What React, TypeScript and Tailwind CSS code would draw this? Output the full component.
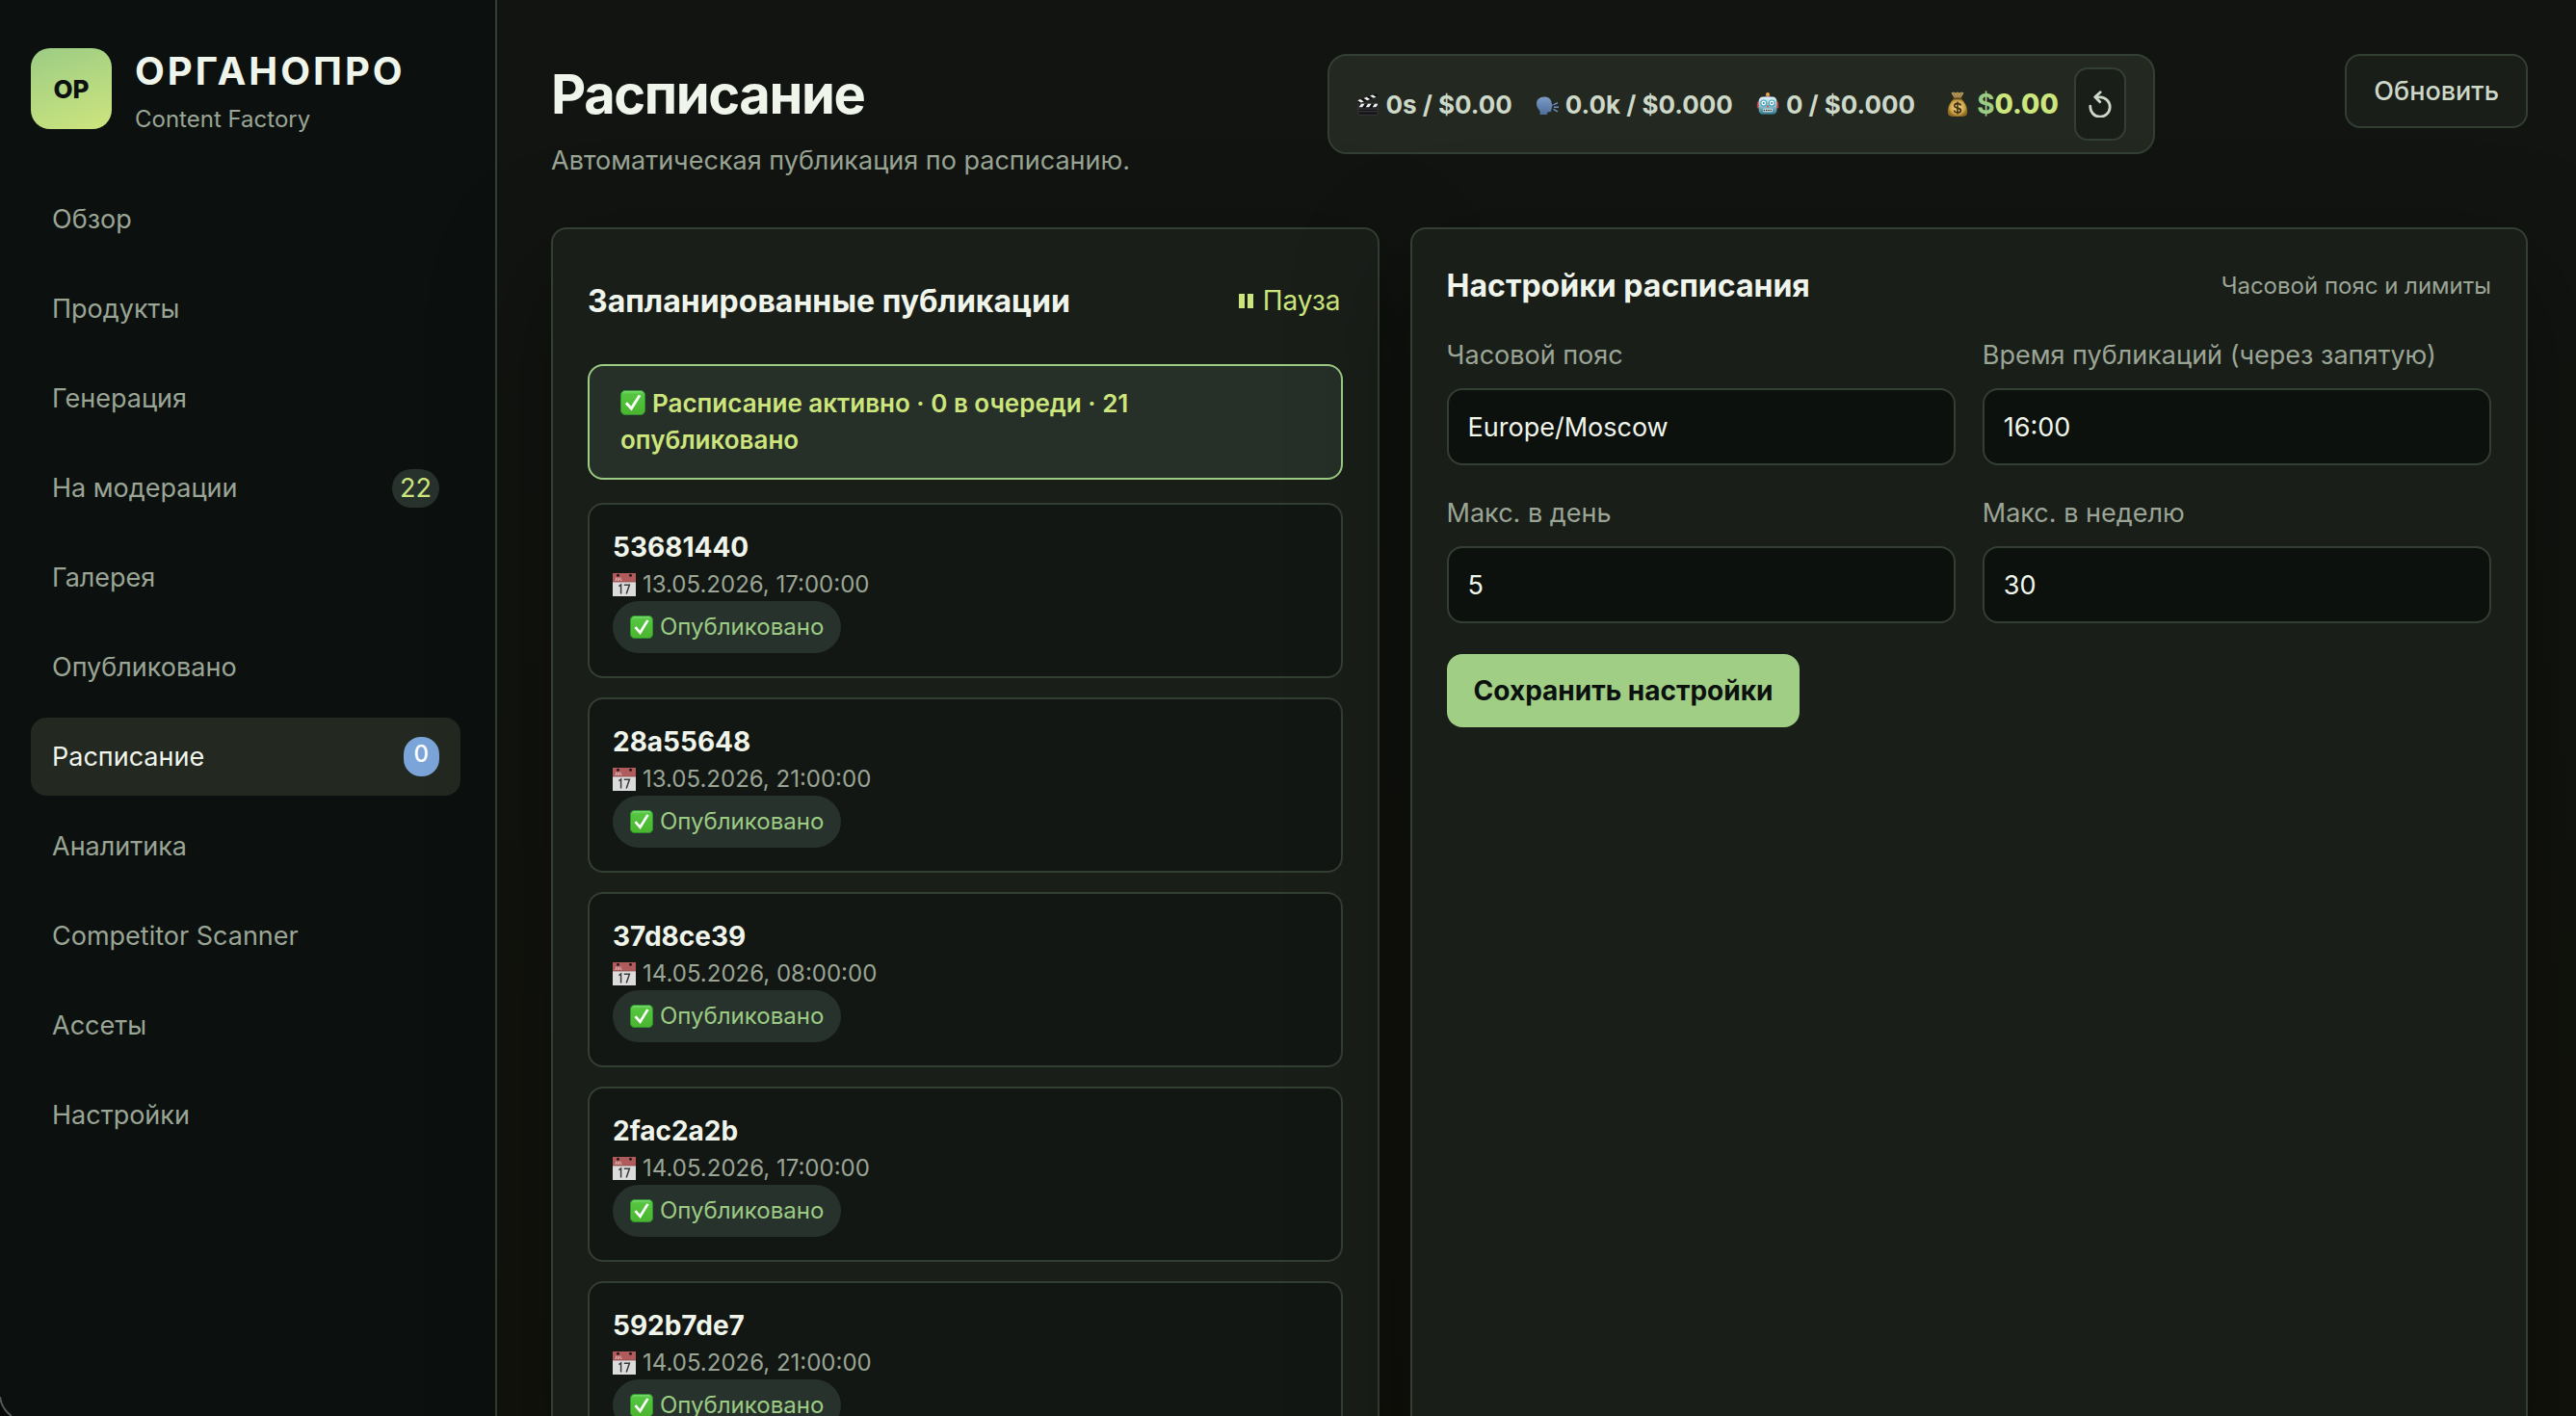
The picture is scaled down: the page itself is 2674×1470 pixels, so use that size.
import type { ReactNode } from 'react';

const navItems = [
  { label: 'Обзор' },
  { label: 'Продукты' },
  { label: 'Генерация' },
  { label: 'На модерации', badge: '22' },
  { label: 'Галерея' },
  { label: 'Опубликовано' },
  { label: 'Расписание', badge: '0', active: true },
  { label: 'Аналитика' },
  { label: 'Competitor Scanner' },
  { label: 'Ассеты' },
  { label: 'Настройки' },
];

const posts = [
  { id: '53681440', date: '13.05.2026, 17:00:00' },
  { id: '28a55648', date: '13.05.2026, 21:00:00' },
  { id: '37d8ce39', date: '14.05.2026, 08:00:00' },
  { id: '2fac2a2b', date: '14.05.2026, 17:00:00' },
  { id: '592b7de7', date: '14.05.2026, 21:00:00' },
];

const fields = [
  { id: 'timezone', label: 'Часовой пояс', value: 'Europe/Moscow' },
  { id: 'times', label: 'Время публикаций (через запятую)', value: '16:00' },
  { id: 'max-day', label: 'Макс. в день', value: '5' },
  { id: 'max-week', label: 'Макс. в неделю', value: '30' },
];

function CheckIcon({ className }: { className: string }) {
  return (
    <svg viewBox="0 0 26 26" className={className} aria-hidden="true">
      <defs>
        <linearGradient id="check-bg" x1="0" y1="0" x2="0" y2="1">
          <stop offset="0" stopColor="#7fe07a" />
          <stop offset="0.15" stopColor="#55c540" />
          <stop offset="1" stopColor="#4bb52f" />
        </linearGradient>
      </defs>
      <rect x="0.5" y="0.5" width="25" height="25" rx="4.5" fill="url(#check-bg)" stroke="#2f9430" />
      <path d="M4.8 14.2 7 12.3l4.1 4.4L18.600 5l2.800.800-9.800 15.800Z" fill="#fff" />
    </svg>
  );
}

function CalendarIcon() {
  return (
    <svg viewBox="0 0 24 24" className="size-6" aria-hidden="true">
      <path d="M0 0h24v24H0z" fill="#dcdcdc" />
      <path d="M0 0h24v9H0z" fill="#b05c5c" />
      <path d="M0 8.6h24v.8H0z" fill="#8f4a4a" />
      <circle cx="5.5" cy="2.2" r="1.5" fill="#2a1717" />
      <circle cx="18.5" cy="2.2" r="1.5" fill="#2a1717" />
      <path d="M2.2 7.4h1.3V4.6M5 4.6v2.8h1.6V4.6M8.2 4.6v2.8h1.4" stroke="#e4c4c4" strokeWidth="0.8" fill="none" />
      <path d="m6.4 13.6 2.2-1.6v9.6M11.8 12.2h5.6l-3.2 9.4" stroke="#3a3a3a" strokeWidth="1.5" fill="none" />
    </svg>
  );
}

function ClapperIcon() {
  return (
    <svg viewBox="0 0 24 24" className="size-6" aria-hidden="true">
      <path d="M2 11.500h20V22.400a.8.8 0 0 1-.8.8H2.800a.8.8 0 0 1-.8-.8Z" fill="#131315" stroke="#4a4a4d" strokeWidth="0.600" />
      <path d="M2.600 17h18.800M2.600 19.800h18.800" stroke="#48484b" strokeWidth="0.900" />
      <path d="M1.200 8.200 21 1l1.200 3.200L2.400 11.400Z" fill="#111113" />
      <path d="M1.200 8.200 4.200 7.100l3.600 2.300L4.800 10.500ZM7.600 5.900l3-1.100 3.600 2.300-3 1.100ZM14 3.500l3-1.100 3.600 2.300-3 1.100Z" fill="#f1f1f2" />
      <path d="M5 11.700h3.600L6.200 15.200H2.600ZM12 11.700h3.600l-2.400 3.500H9.600ZM19 11.700h2.900v1.200l-1.700 2.300h-3.600Z" fill="#f1f1f2" />
    </svg>
  );
}

function SpeakingIcon() {
  return (
    <svg viewBox="0 0 24 24" className="size-6" aria-hidden="true">
      <defs>
        <linearGradient id="head" x1="0" y1="0" x2="0" y2="1">
          <stop offset="0" stopColor="#7d9bc6" />
          <stop offset="1" stopColor="#4d6d9c" />
        </linearGradient>
      </defs>
      <path
        d="M9 4.600c4.600 0 7.400 2.600 7.600 6.200 0 .8 1.400 2.400 1.400 3 0 .6-1.200.6-1.200 1.200s.4 1 .2 1.600-.6.600-.6 1.200c.2 1.800-.6 2.400-1.800 2.400-1.600 0-2.400.2-2.600 1.400l-.2 1.400H4.600c.6-3-.4-4.200-1.600-5.800C1.800 15.600 1 14 1 11.800 1 7.600 4.200 4.600 9 4.600Z"
        fill="url(#head)"
      />
      <path d="m19 12.600 3.600-1.800M19.400 15.200h4M19 17.600l3.400 2" stroke="#6f8fbd" strokeWidth="1.400" strokeLinecap="round" />
    </svg>
  );
}

function RobotIcon() {
  return (
    <svg viewBox="0 0 24 24" className="size-6" aria-hidden="true">
      <defs>
        <linearGradient id="robot" x1="0" y1="0" x2="0" y2="1">
          <stop offset="0" stopColor="#e4f5f8" />
          <stop offset="0.500" stopColor="#93c6d2" />
          <stop offset="1" stopColor="#2f7486" />
        </linearGradient>
      </defs>
      <path d="M9.500 2.800h5v2.400h-5z" fill="#65499a" />
      <circle cx="12" cy="2" r="2" fill="#f0a83a" />
      <rect x="0.800" y="9.600" width="3" height="7" rx="1.400" fill="#c23c3c" />
      <rect x="20.200" y="9.600" width="3" height="7" rx="1.400" fill="#c23c3c" />
      <rect x="2.600" y="4.400" width="18.800" height="18.400" rx="4.400" fill="url(#robot)" />
      <circle cx="7.800" cy="11" r="3" fill="#fff" stroke="#3ba3c4" strokeWidth="1.200" />
      <circle cx="16.200" cy="11" r="3" fill="#fff" stroke="#3ba3c4" strokeWidth="1.200" />
      <circle cx="7.800" cy="11" r="1" fill="#3b7c94" />
      <circle cx="16.200" cy="11" r="1" fill="#3b7c94" />
      <path d="m12 12.400 1.400 2.800h-2.800Z" fill="#d94a3d" />
      <rect x="7" y="16.800" width="10" height="3.400" rx="1" fill="#d8eef2" />
      <path d="M7.600 18.500h8.800" stroke="#333" strokeWidth="1.600" strokeDasharray="1.600 0.700" />
    </svg>
  );
}

function MoneyBagIcon() {
  return (
    <svg viewBox="0 0 24 27" className="h-[27px] w-6" aria-hidden="true">
      <defs>
        <radialGradient id="bag">
          <stop offset="0" stopColor="#f5d98a" />
          <stop offset="0.700" stopColor="#d3a94d" />
          <stop offset="1" stopColor="#8f6a24" />
        </radialGradient>
      </defs>
      <path d="M5.500 1.400 8 .6l2 .8 2-.8 2 .8 2-.8 2.500.8-3.500 6.200H9Z" fill="#b99c5c" />
      <path d="m8 1.800 2.400 5M12 1.800v5M16 1.800l-2.400 5" stroke="#7b6230" strokeWidth="0.800" />
      <path d="M8.600 7h6.800c4.400 4.200 6.800 9 6.800 13.600 0 4-2 5.400-4.800 5.400H6.600c-2.800 0-4.800-1.400-4.800-5.400C1.800 16 4.200 11.200 8.600 7Z" fill="url(#bag)" />
      <path d="M8 7.400h8" stroke="#5d4617" strokeWidth="1.600" strokeLinecap="round" />
      <path d="M15.400 14.600c-.4-1.600-1.600-2.200-3.400-2.200s-3.200.8-3.200 2.300c0 3.400 6.600 1.400 6.600 4.700 0 1.600-1.500 2.400-3.400 2.400s-3.300-.7-3.500-2.300M12 10.600v13" stroke="#3f3013" strokeWidth="1.600" fill="none" />
    </svg>
  );
}

function ResetIcon() {
  return (
    <svg viewBox="0 0 24 28" className="h-7 w-6" fill="none" aria-hidden="true">
      <path d="M1.800 16.200a10.200 10.200 0 1 0 10.200-9.400H7.400" stroke="#cdd8c8" strokeWidth="2.800" strokeLinecap="round" />
      <path d="M12.200 1.800 6.800 6.700l5 5.100" stroke="#cdd8c8" strokeWidth="2.800" strokeLinecap="round" strokeLinejoin="round" />
    </svg>
  );
}

function Stat({ icon, children }: { icon: ReactNode; children: ReactNode }) {
  return (
    <span className="flex items-center gap-[7px]">
      {icon}
      {children}
    </span>
  );
}

export default function App() {
  return (
    <div className="relative flex h-screen overflow-hidden bg-linear-to-b from-[#111411] to-[#12130c] font-['Inter',sans-serif] text-[#f0f5ec]">
      {/* Sidebar */}
      <aside className="flex w-[516px] shrink-0 flex-col border-r-2 border-[#343f33] bg-[#0c110f] pt-[50px] pr-9 pl-8">
        <div className="flex items-start gap-6">
          <div className="flex size-[84px] items-center justify-center rounded-[20px] bg-linear-160 from-[#9ccc84] to-[#cde57d] text-[26px] font-extrabold text-[#0c110f]">
            OP
          </div>
          <div>
            <div className="text-[40px] leading-[48px] font-bold tracking-[3px]">ОРГАНОПРО</div>
            <div className="mt-2 text-[24px] leading-[36px] text-[#9aa596]">Content Factory</div>
          </div>
        </div>

        <nav className="mt-[45px] flex flex-col gap-3">
          {navItems.map((item) => (
            <a
              key={item.label}
              href="#"
              className={`flex items-center justify-between rounded-[16px] px-[22px] py-[18px] text-[27px] leading-[45px] ${
                item.active ? 'bg-[#232821] text-[#f0f5ec]' : 'text-[#9aa596]'
              }`}
            >
              {item.label}
              {item.badge && (
                <span
                  className={
                    item.active
                      ? 'rounded-[18px] bg-[#7ba4d9] px-[11px] pb-[5px] text-[24px] leading-[36px] font-medium text-white'
                      : 'rounded-full bg-[#28322d] px-2 text-[27px] leading-[40px] text-[#cde57d]'
                  }
                >
                  {item.badge}
                </span>
              )}
            </a>
          ))}
        </nav>
      </aside>

      {/* Main */}
      <main className="min-w-0 flex-1 pt-14 pr-[50px] pl-14">
        <header className="flex items-start justify-between">
          <div className="min-w-[608px]">
            <h1 className="text-[56px] leading-[84px] font-bold tracking-tight">Расписание</h1>
            <p className="mt-[5px] text-[27px] leading-[44px] text-[#9aa596]">Автоматическая публикация по расписанию.</p>
          </div>

          <div className="flex items-center gap-6 rounded-[20px] border-2 border-[#343f33] bg-[#232821] px-7 py-3 text-[26px] font-bold text-[#cdd8c8]">
            <Stat icon={<ClapperIcon />}>0s / $0.00</Stat>
            <Stat icon={<SpeakingIcon />}>0.0k / $0.000</Stat>
            <Stat icon={<RobotIcon />}>0 / $0.000</Stat>
            <div className="ml-2 flex items-center gap-4">
              <span className="flex items-center gap-2 text-[28px] text-[#9ccc84]">
                <MoneyBagIcon />
                <span>
                  $<span className="font-extrabold text-[#cde57d]">0.00</span>
                </span>
              </span>
              <button
                aria-label="Сбросить"
                className="flex h-[76px] w-[54px] items-center justify-center rounded-[14px] border-2 border-[#343f33] bg-[#1a1e19]"
              >
                <ResetIcon />
              </button>
            </div>
          </div>

          <button className="rounded-[16px] border-2 border-[#343f33] bg-[#1a1e19] px-7 py-4 text-[27px] leading-[41px] font-medium text-[#cdd8c8]">
            Обновить
          </button>
        </header>

        <div className="mt-[47px] grid grid-cols-[1fr_1.35fr] gap-8">
          <section className="rounded-[16px] border-2 border-[#343f33] bg-[#1a1e19] p-9 shadow-[0_40px_120px_rgba(0,0,0,0.35)]">
            <div className="flex items-center justify-between pt-4">
              <h2 className="text-[32px] leading-[45px] font-bold">Запланированные публикации</h2>
              <button className="flex items-center gap-[10px] pr-0.5 text-[28px] leading-[45px] text-[#cde57d]">
                <svg viewBox="0 0 15 15" className="size-[15px]" fill="currentColor" aria-hidden="true">
                  <path d="M0 0h6v15H0zM9 0h6v15H9z" />
                </svg>
                Пауза
              </button>
            </div>

            <div className="mt-[43px] rounded-[16px] border-2 border-[#9ccc84] bg-[#262f28] px-8 py-5 text-[26px] leading-[38px] font-semibold text-[#cde57d]">
              <CheckIcon className="mr-[7px] mb-[5px] inline size-[26px]" />
              Расписание активно · 0 в очереди · 21 опубликовано
            </div>

            <ul className="mt-6 flex flex-col gap-5">
              {posts.map((post) => (
                <li key={post.id} className="rounded-[16px] border-2 border-[#343f33] bg-[#131713] p-6">
                  <div className="text-[28px] leading-[41px] font-bold">{post.id}</div>
                  <div className="flex items-center gap-[7px] text-[24px] leading-[35px] text-[#9aa596]">
                    <CalendarIcon />
                    {post.date}
                  </div>
                  <div className="flex">
                    <span className="flex items-center gap-[7px] rounded-full bg-[#28322d] px-[18px] text-[24px] leading-[54px] text-[#9ccc84]">
                      <CheckIcon className="size-6" />
                      Опубликовано
                    </span>
                  </div>
                </li>
              ))}
            </ul>
          </section>

          <section className="rounded-[16px] border-2 border-[#343f33] bg-[#1a1e19] p-9 shadow-[0_40px_120px_rgba(0,0,0,0.35)]">
            <div className="flex items-center justify-between">
              <h2 className="text-[32px] leading-[45px] font-bold">Настройки расписания</h2>
              <span className="text-[24px] text-[#9aa596]">Часовой пояс и лимиты</span>
            </div>

            <form className="mt-7">
              <div className="grid grid-cols-2 gap-7">
                {fields.map((field) => (
                  <div key={field.id} className="flex flex-col gap-3">
                    <label htmlFor={field.id} className="text-[27px] leading-[44px] text-[#9aa596]">
                      {field.label}
                    </label>
                    <input
                      id={field.id}
                      defaultValue={field.value}
                      className="h-20 w-full rounded-[16px] border-2 border-[#343f33] bg-[#0c110d] px-5 text-[27px] text-[#f0f5ec]"
                    />
                  </div>
                ))}
              </div>
              <button
                type="button"
                className="mt-8 rounded-[16px] bg-[#9fce84] px-7 py-4 text-[28px] leading-[44px] font-bold text-[#0c110f]"
              >
                Сохранить настройки
              </button>
            </form>
          </section>
        </div>
      </main>

      {/* Rounded window corner */}
      <svg viewBox="0 0 12 24" className="absolute bottom-0 left-0 h-6 w-3" aria-hidden="true">
        <path d="M0 4c1 8 5 15 12 20H0Z" fill="#070707" />
        <path d="M0 4c1 8 5 15 12 20" fill="none" stroke="#55585a" strokeWidth="2" />
      </svg>
    </div>
  );
}
